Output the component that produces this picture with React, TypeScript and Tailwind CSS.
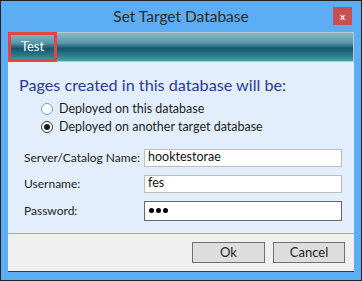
import React from 'react'

const Radio: React.FC<{ checked?: boolean; label: string }> = ({ checked, label }) => (
  <label className="flex items-center h-[18px]">
    <span
      className={`flex items-center justify-center w-[12px] h-[12px] rounded-full border bg-white ${checked ? 'border-[#333]' : 'border-[#6f9bd8]'}`}
    >
      {checked && <span className="w-[6px] h-[6px] rounded-full bg-[#1a1a1a]" />}
    </span>
    <span className="ml-[6px] text-[12.5px] text-[#1e1e1e]">{label}</span>
  </label>
)

const Field: React.FC<{ label: string; value: string }> = ({ label, value }) => (
  <div className="flex items-center h-[17px]">
    <span className="w-[120px] whitespace-nowrap text-[12px] text-[#1e1e1e]">{label}</span>
    <div className="w-[198px] h-[18px] bg-white border border-[#bcbcbc] flex items-center px-[3px] text-[12.5px] text-[#111]">
      {value}
    </div>
  </div>
)

export default function App() {
  return (
    <div
      className="w-[362px] h-[281px] bg-[#5dadf5] border border-[#222] flex flex-col"
      style={{ fontFamily: 'Lato, "Open Sans", sans-serif' }}
    >
      {/* Title bar */}
      <div className="h-[31px] flex items-center relative">
        <div className="flex-1 text-center text-[15.5px] text-[#2a2a2a] pt-[1px]">Set Target Database</div>
        <button className="absolute left-[332px] top-[6px] w-[19px] h-[18px] bg-[#c75050] flex items-center justify-center text-white text-[10px] font-bold leading-none">
          x
        </button>
      </div>

      {/* Client area */}
      <div className="mx-[7px] flex-1 mb-[8px] flex flex-col bg-[#e2eefc] border-b border-[#3a3a3a]">
        {/* Header band */}
        <div
          className="h-[30px] flex border border-[#b8c8cc]"
          style={{
            background:
              'linear-gradient(to bottom, #86b9c6 0%, #5b98a8 35%, #15566f 55%, #2c7a88 80%, #4aa0a6 100%)',
          }}
        >
          <div className="w-[49px] h-[30px] -mt-[1px] -ml-[1px] border-[3px] border-[#e8443f] flex items-center justify-center text-white text-[13px]">
            Test
          </div>
        </div>

        {/* Body */}
        <div className="flex-1 pl-[11px] pt-[13px]">
          <div className="text-[16.2px] text-[#2b3a96] leading-[20px]">Pages created in this database will be:</div>
          <div className="pl-[22px] mt-[5px] flex flex-col">
            <Radio label="Deployed on this database" />
            <Radio checked label="Deployed on another target database" />
          </div>
          <div className="pl-[5px] mt-[13px] flex flex-col gap-[9px]">
            <Field label="Server/Catalog Name:" value="hooktestorae" />
            <Field label="Username:" value="fes" />
            <div className="flex items-center h-[19px]">
              <span className="w-[120px] text-[12px] text-[#1e1e1e]">Password:</span>
              <div className="w-[198px] h-[20px] bg-white border border-[#666] flex items-center px-[4px] gap-[2px]">
                <span className="w-[5px] h-[5px] rounded-full bg-black" />
                <span className="w-[5px] h-[5px] rounded-full bg-black" />
                <span className="w-[5px] h-[5px] rounded-full bg-black" />
              </div>
            </div>
          </div>
        </div>

        {/* Footer */}
        <div className="h-[38px] bg-[#f0f0f0] border-t border-[#8fa9d4] flex items-center justify-end gap-[8px] pr-[9px]">
          <button className="w-[73px] h-[21px] bg-[#dddddd] border border-[#707070] text-[13px] text-[#1e1e1e]">Ok</button>
          <button className="w-[72px] h-[21px] bg-[#dddddd] border border-[#707070] text-[13px] text-[#1e1e1e]">Cancel</button>
        </div>
      </div>
    </div>
  )
}
